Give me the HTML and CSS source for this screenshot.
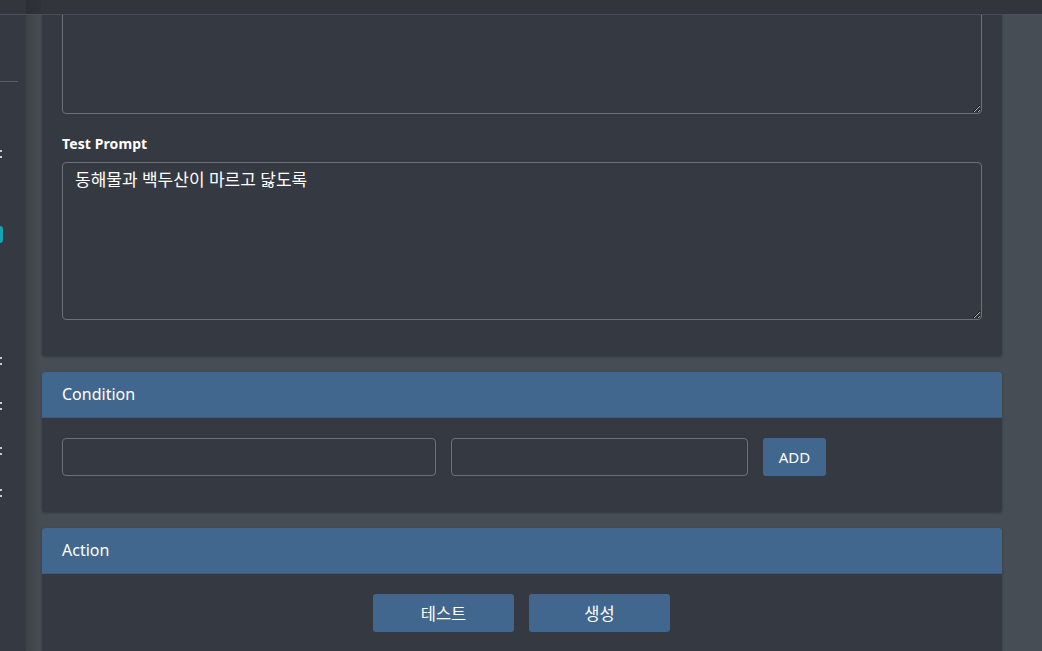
FILE: index.html
```html
<!DOCTYPE html>
<html lang="ko">
<head>
<meta charset="utf-8">
<title>Prompt</title>
<link rel="stylesheet" href="styles.css">
</head>
<body>
<div class="app">
  <aside class="sidebar">
    <div class="side-top"></div>
    <div class="side-rule"></div>
    <div class="side-item first"><span class="dots"></span></div>
    <div class="side-active"></div>
    <div class="side-item second"><span class="dots"></span></div>
    <div class="side-item"><span class="dots"></span></div>
    <div class="side-item short"><span class="dots"></span></div>
    <div class="side-item"><span class="dots"></span></div>
  </aside>
  <main class="main">
    <div class="topbar"></div>
    <div class="content">
      <section class="card card-top">
        <div class="card-body">
          <textarea class="field area area-clipped" readonly></textarea>
          <label class="label">Test Prompt</label>
          <textarea class="field area" readonly>동해물과 백두산이 마르고 닳도록</textarea>
        </div>
      </section>
      <section class="card">
        <header class="card-head">Condition</header>
        <div class="card-body row">
          <input class="field input wide" type="text">
          <input class="field input narrow" type="text">
          <button class="btn btn-add">ADD</button>
        </div>
      </section>
      <section class="card">
        <header class="card-head">Action</header>
        <div class="card-body actions">
          <button class="btn btn-wide">테스트</button>
          <button class="btn btn-wide">생성</button>
        </div>
      </section>
    </div>
  </main>
</div>
</body>
</html>
```

FILE: styles.css
```css
html, body {
  margin: 0;
  padding: 0;
  height: 100%;
  overflow: hidden;
}
body {
  background: #474d55;
  font-family: "Noto Sans", "Noto Sans CJK KR", sans-serif;
  color: #ffffff;
}
.app {
  display: flex;
  height: 651px;
}
.sidebar {
  width: 26px;
  flex: none;
  background: #353941;
  display: flex;
  flex-direction: column;
  overflow: hidden;
}
.side-top {
  height: 14px;
  background: #33373d;
  border-bottom: 1px solid #4c5159;
  flex: none;
}
.side-rule {
  margin-top: 66px;
  width: 18px;
  height: 1px;
  background: #5a5f67;
  flex: none;
}
.side-item {
  height: 45px;
  position: relative;
  flex: none;
}
.side-item.short {
  height: 42px;
}
.side-item.first {
  margin-top: 48px;
}
.side-item.second {
  margin-top: 94px;
}
.dots {
  display: block;
  position: absolute;
  left: 0;
  top: 20px;
  width: 2px;
  height: 2px;
  background: #c9ccd0;
  box-shadow: 0 6px 0 #c9ccd0;
}
.side-active {
  margin-top: 51px;
  width: 3px;
  height: 17px;
  background: #17a2b8;
  border-radius: 0 3px 3px 0;
  flex: none;
}
.main {
  flex: 1;
  display: flex;
  flex-direction: column;
  background: linear-gradient(to right, #3d4248 0px, #454a51 10px, #474d55 16px);
  min-width: 0;
}
.topbar {
  height: 14px;
  flex: none;
  background: linear-gradient(to right, #2c3035 0px, #2f3338 14px, #32363c 16px);
  border-bottom: 1px solid #4c5159;
}
.content {
  padding: 0 40px 0 16px;
  display: flex;
  flex-direction: column;
  gap: 16px;
}
.card {
  background: #353941;
  border-radius: 3px;
  box-shadow: 0 1px 3px rgba(0, 0, 0, 0.25);
  overflow: hidden;
}
.card-top {
  border-radius: 0 0 3px 3px;
}
.card-head {
  height: 46px;
  background: #41678f;
  border-bottom: 1px solid #3a5b7f;
  box-sizing: border-box;
  padding: 0 20px 1px;
  display: flex;
  align-items: center;
  font-size: 16px;
  line-height: 1;
}
.card-body {
  padding: 20px 20px 36px;
}
.card-top .card-body {
  padding-top: 0;
}
.field {
  box-sizing: border-box;
  background: transparent;
  border: 1px solid #6c7077;
  border-radius: 4px;
  color: #ffffff;
  font-family: "Noto Sans", "Noto Sans CJK KR", sans-serif;
  outline: none;
}
.area {
  display: block;
  width: 100%;
  height: 158px;
  padding: 5px 12px;
  font-size: 17px;
  line-height: 24px;
  resize: vertical;
}
.area-clipped {
  height: 104px;
  margin-top: -5px;
}
.label {
  display: block;
  margin: 20px 0 9px;
  font-size: 14px;
  font-weight: 700;
  line-height: 19px;
  letter-spacing: 0.1px;
}
.row {
  display: flex;
  gap: 15px;
}
.input {
  height: 38px;
  padding: 0 12px;
  font-size: 14px;
}
.wide {
  width: 374px;
}
.narrow {
  width: 297px;
}
.btn {
  height: 38px;
  border: none;
  border-radius: 3px;
  background: #41678f;
  color: #ffffff;
  font-family: "Noto Sans", "Noto Sans CJK KR", sans-serif;
  font-size: 15px;
  padding: 0;
  cursor: pointer;
}
.btn-add {
  width: 63px;
}
.actions {
  display: flex;
  justify-content: center;
  gap: 15px;
  padding: 20px 21px 36px 20px;
}
.btn-wide {
  width: 141px;
  font-size: 16.5px;
}
```
